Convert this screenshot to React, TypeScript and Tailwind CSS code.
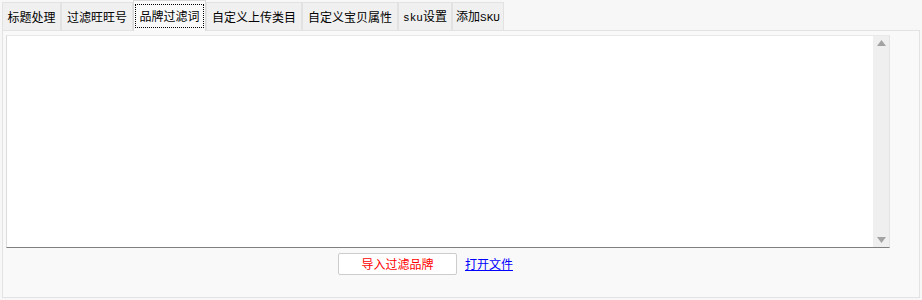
import React from "react";

const tabs = [
  { label: "标题处理", w: 59 },
  { label: "过滤旺旺号", w: 72 },
  { label: "品牌过滤词", w: 73, active: true },
  { label: "自定义上传类目", w: 96 },
  { label: "自定义宝贝属性", w: 96 },
  { label: "sku设置", w: 54 },
  { label: "添加SKU", w: 52 },
];

const font = { fontFamily: '"Noto Sans CJK SC", "Microsoft YaHei", sans-serif' };
const mono = { fontFamily: '"Liberation Mono", "DejaVu Sans Mono", monospace' };

export default function App() {
  return (
    <div
      className="w-[922px] h-[300px] bg-[#f7f7f7] text-[12px] text-black overflow-hidden"
      style={font}
    >
      <div className="flex items-end h-[30px] pl-[2px]">
        {tabs.map((t) =>
          t.active ? (
            <div
              key={t.label}
              className="relative z-10 h-[31px] -mb-[1px] bg-[#f9f9f9] border border-[#d9d9d9] border-b-0 flex items-center justify-center"
              style={{ width: t.w }}
            >
              <span className="px-[1px] border border-dotted border-black leading-[22px] h-[24px] w-[69px] flex items-center justify-center">
                {t.label}
              </span>
            </div>
          ) : (
            <div
              key={t.label}
              className="h-[28px] bg-[#f0f0f0] border border-[#e2e2e2] border-b-0 flex items-center justify-center"
              style={{ width: t.w }}
            >
              {t.label.startsWith("sku") ? (
                <span>
                  <span style={mono} className="text-[11px]">sku</span>设置
                </span>
              ) : t.label.endsWith("SKU") ? (
                <span>
                  添加<span style={mono} className="text-[11px]">SKU</span>
                </span>
              ) : (
                t.label
              )}
            </div>
          )
        )}
      </div>
      <div className="ml-[2px] w-[918px] h-[268px] bg-[#f9f9f9] border border-[#e3e3e3] pt-[4px] pl-[3px]">
        <div className="flex w-[884px] h-[213px] bg-white border-l border-t border-r border-b border-l-[#dcdcdc] border-t-[#e8e8e8] border-r-[#e3e3e3] border-b-[#7f7f7f]">
          <div className="flex-1" />
          <div className="w-[16px] h-full bg-[#efefef] flex flex-col items-center justify-between py-[4px]">
            <svg width="9" height="6" viewBox="0 0 9 6">
              <polygon points="4.5,0 9,6 0,6" fill="#a3a3a3" />
            </svg>
            <svg width="9" height="6" viewBox="0 0 9 6">
              <polygon points="0,0 9,0 4.5,6" fill="#a3a3a3" />
            </svg>
          </div>
        </div>
        <div className="flex items-center mt-[5px] ml-[332px]">
          <button className="w-[119px] h-[22px] bg-white border border-[#cccccc] rounded-[2px] text-[#ff0000] text-[12px] flex items-center justify-center">
            导入过滤品牌
          </button>
          <span className="ml-[8px] text-[#0000ff] underline text-[12px]">打开文件</span>
        </div>
      </div>
    </div>
  );
}
